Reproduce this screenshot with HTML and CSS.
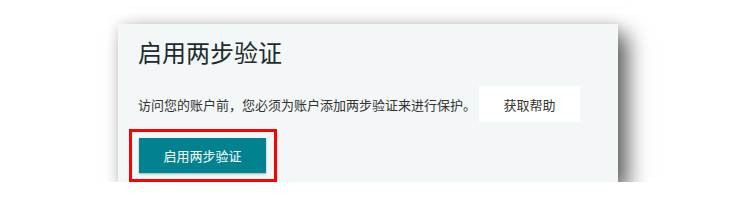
FILE: index.html
```html
<!DOCTYPE html>
<html lang="zh-CN">
  <head>
    <meta charset="UTF-8" />
    <title>启用两步验证</title>
    <link rel="stylesheet" href="styles.css">
  </head>
  <body>
    <!-- Two-step verification card -->
    <div class="card">
      <h1 class="card-title">启用两步验证</h1>
      <div class="card-row">
        <p class="card-text">访问您的账户前，您必须为账户添加两步验证来进行保护。</p>
        <button class="help-button">获取帮助</button>
      </div>
      <!-- Highlighted action -->
      <div class="highlight">
        <button class="primary-button">启用两步验证</button>
      </div>
    </div>
  </body>
</html>
```

FILE: styles.css
```css
/* General styles */
body {
    margin: 0;
    padding: 0;
    background: #fff;
    font-family: "Noto Sans CJK SC", "Noto Sans", sans-serif;
    color: #333;
}

/* Card */
.card {
    box-sizing: border-box;
    width: 500px;
    height: 158px;
    margin: 24px 0 0 118px;
    padding: 12px 20px 0 20px;
    background: #f3f7f8;
    box-shadow: 10px 10px 20px rgba(0, 0, 0, 0.6), 0 0 12px rgba(0, 0, 0, 0.12);
}

.card-title {
    margin: 0;
    font-size: 24px;
    font-weight: normal;
    line-height: 32px;
    color: #1d2b2f;
}

/* Text + help button row */
.card-row {
    display: flex;
    align-items: center;
    gap: 3px;
    margin-top: 18px;
}

.card-text {
    margin: 0;
    font-size: 13px;
    color: #333;
}

.help-button {
    width: 101px;
    height: 36px;
    border: none;
    background: #fff;
    font-family: inherit;
    font-size: 13px;
    color: #333;
}

/* Red annotation box */
.highlight {
    display: inline-block;
    margin: 7px 0 0 -9px;
    padding: 6px 8px 6px 7px;
    border: 3px solid #f00;
}

.primary-button {
    display: block;
    width: 127px;
    height: 35px;
    border: none;
    background: #02828f;
    color: #fff;
    font-family: inherit;
    font-size: 13px;
    box-shadow: 0 1px 2px rgba(0, 0, 0, 0.3);
}
```
